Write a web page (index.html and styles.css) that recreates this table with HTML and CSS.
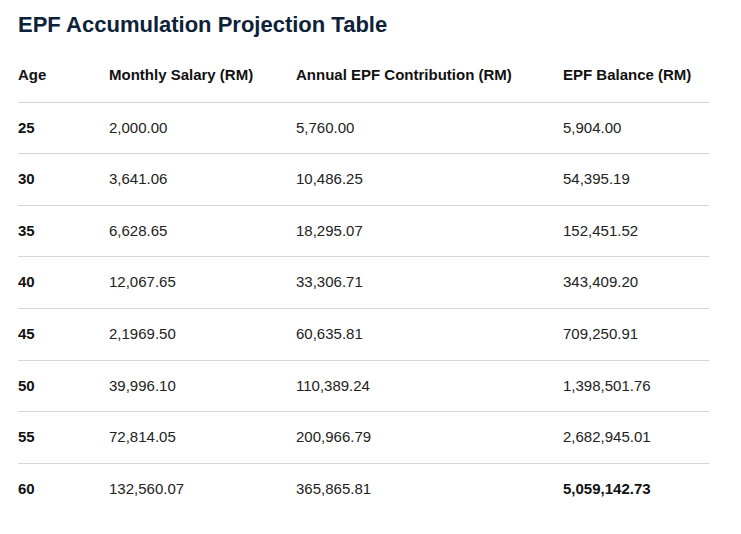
FILE: index.html
```html
<!DOCTYPE html>
<html lang="en">
<head>
<meta charset="utf-8">
<title>EPF Accumulation Projection Table</title>
<link rel="stylesheet" href="styles.css">
</head>
<body>
<main class="page">
  <h1 class="title">EPF Accumulation Projection Table</h1>
  <table class="epf-table">
    <colgroup>
      <col class="col-age">
      <col class="col-salary">
      <col class="col-contrib">
      <col class="col-balance">
    </colgroup>
    <thead>
      <tr>
        <th>Age</th>
        <th>Monthly Salary (RM)</th>
        <th>Annual EPF Contribution (RM)</th>
        <th>EPF Balance (RM)</th>
      </tr>
    </thead>
    <tbody>
      <tr><td class="age">25</td><td>2,000.00</td><td>5,760.00</td><td>5,904.00</td></tr>
      <tr><td class="age">30</td><td>3,641.06</td><td>10,486.25</td><td>54,395.19</td></tr>
      <tr><td class="age">35</td><td>6,628.65</td><td>18,295.07</td><td>152,451.52</td></tr>
      <tr><td class="age">40</td><td>12,067.65</td><td>33,306.71</td><td>343,409.20</td></tr>
      <tr><td class="age">45</td><td>2,1969.50</td><td>60,635.81</td><td>709,250.91</td></tr>
      <tr><td class="age">50</td><td>39,996.10</td><td>110,389.24</td><td>1,398,501.76</td></tr>
      <tr><td class="age">55</td><td>72,814.05</td><td>200,966.79</td><td>2,682,945.01</td></tr>
      <tr class="last"><td class="age">60</td><td>132,560.07</td><td>365,865.81</td><td class="total">5,059,142.73</td></tr>
    </tbody>
  </table>
</main>
</body>
</html>
```

FILE: styles.css
```css
html, body {
  margin: 0;
  padding: 0;
  background: #ffffff;
}

body {
  font-family: "Liberation Sans", Arial, sans-serif;
  color: #1a1a1a;
}

.page {
  padding: 0 32px 0 18px;
}

.title {
  margin: 12px 0 13px;
  font-size: 22px;
  line-height: 25px;
  font-weight: bold;
  color: #0d2238;
}

.epf-table {
  width: 691px;
  border-collapse: collapse;
  table-layout: fixed;
  font-size: 15px;
  line-height: 18.6px;
}

.col-age { width: 91px; }
.col-salary { width: 187px; }
.col-contrib { width: 267px; }
.col-balance { width: 146px; }

.epf-table th,
.epf-table td {
  text-align: left;
  padding: 16px 0;
  white-space: nowrap;
  border-bottom: 1px solid #d6d6d6;
}

.epf-table th {
  font-weight: bold;
  color: #111111;
  padding-bottom: 17px;
}

.epf-table td {
  color: #222222;
}

.epf-table td.age,
.epf-table td.total {
  font-weight: bold;
  color: #111111;
}

.epf-table tr.last td {
  border-bottom: none;
}
```
